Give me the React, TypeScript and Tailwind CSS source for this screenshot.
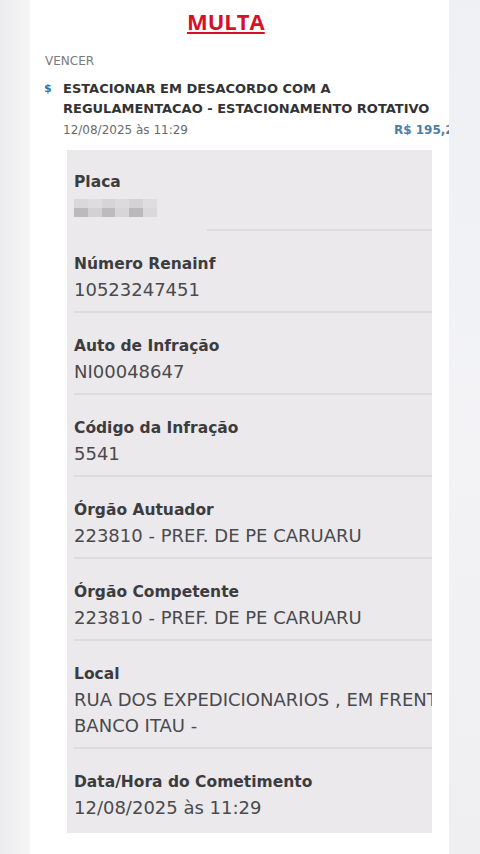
import type { ReactNode } from 'react'

const font = { fontFamily: '"DejaVu Sans", "Noto Sans", sans-serif' }

function Row({ label, children, last }: { label: string; children: ReactNode; last?: boolean }) {
  return (
    <div className={last ? 'pt-[23px] pb-[12px]' : 'border-b-2 border-[#dddbde] pt-[23px] pb-[8px]'}>
      <div className="text-[15.5px] leading-[20px] font-bold text-[#3c3c3e]">{label}</div>
      <div className="mt-[3px] text-[18px] leading-[26px] text-[#4a4a4c]">{children}</div>
    </div>
  )
}

export default function App() {
  return (
    <div className="flex h-[854px] w-[480px] overflow-hidden bg-[#f2f2f4]" style={font}>
      <div className="w-[30px] bg-gradient-to-r from-[#ececee] to-[#f6f6f7]" />

      <div className="w-[419px] overflow-hidden bg-white">
        <div
          className="ml-[157px] pt-[6px] text-[22px] leading-[30px] font-bold text-[#d6102c] underline decoration-2 underline-offset-2"
          style={{ fontFamily: '"Open Sans", sans-serif' }}
        >
          MULTA
        </div>

        <div className="mt-[17px] pl-[15px] text-[12px] leading-[16px] text-[#7a7a7c]">VENCER</div>

        <div className="mt-[10px] flex">
          <div className="w-[33px] shrink-0 pl-[14px] text-[11px] leading-[20px] font-bold text-[#3b6fb0]">$</div>
          <div className="min-w-0 flex-1 whitespace-nowrap">
            <div className="text-[13px] leading-[20px] font-bold text-[#333335]">
              ESTACIONAR EM DESACORDO COM A
              <br />
              REGULAMENTACAO - ESTACIONAMENTO ROTATIVO
            </div>
            <div className="flex items-center justify-between">
              <span className="text-[12px] leading-[22px] text-[#6a6a6c]">12/08/2025 às 11:29</span>
              <span className="-mr-[13px] text-[12px] leading-[22px] font-bold text-[#4c7ea8]">R$ 195,20</span>
            </div>
          </div>
        </div>

        <div className="mt-[9px] ml-[37px] w-[365px] overflow-hidden bg-[#ebe9ec] pl-[7px] whitespace-nowrap">
          <div className="relative pt-[22px] pb-[10px]">
            <div className="text-[15.5px] leading-[20px] font-bold text-[#3c3c3e]">Placa</div>
            <div className="mt-[3px] flex h-[26px] items-center">
              <div className="grid h-[18px] w-[83px] grid-cols-6 grid-rows-2 opacity-60">
                <div className="bg-[#cfcdd0]" />
                <div className="bg-[#d6d4d7]" />
                <div className="bg-[#c9c7ca]" />
                <div className="bg-[#d3d1d4]" />
                <div className="bg-[#c6c4c7]" />
                <div className="bg-[#d8d6d9]" />
                <div className="bg-[#9d9b9e]" />
                <div className="bg-[#c4c2c5]" />
                <div className="bg-[#a09ea1]" />
                <div className="bg-[#cac8cb]" />
                <div className="bg-[#9a989b]" />
                <div className="bg-[#d0ced1]" />
              </div>
            </div>
            <div className="absolute bottom-0 left-[133px] right-0 h-[2px] bg-[#dddbde]" />
          </div>
          <Row label="Número Renainf">10523247451</Row>
          <Row label="Auto de Infração">NI00048647</Row>
          <Row label="Código da Infração">5541</Row>
          <Row label="Órgão Autuador">223810 - PREF. DE PE CARUARU</Row>
          <Row label="Órgão Competente">223810 - PREF. DE PE CARUARU</Row>
          <Row label="Local">
            RUA DOS EXPEDICIONARIOS , EM FRENTE AO
            <br />
            BANCO ITAU -
          </Row>
          <Row label="Data/Hora do Cometimento" last>
            12/08/2025 às 11:29
          </Row>
        </div>
      </div>

      <div className="flex-1 bg-gradient-to-b from-[#eef0f3] via-[#f3f3f6] to-[#efeff2]" />
    </div>
  )
}
